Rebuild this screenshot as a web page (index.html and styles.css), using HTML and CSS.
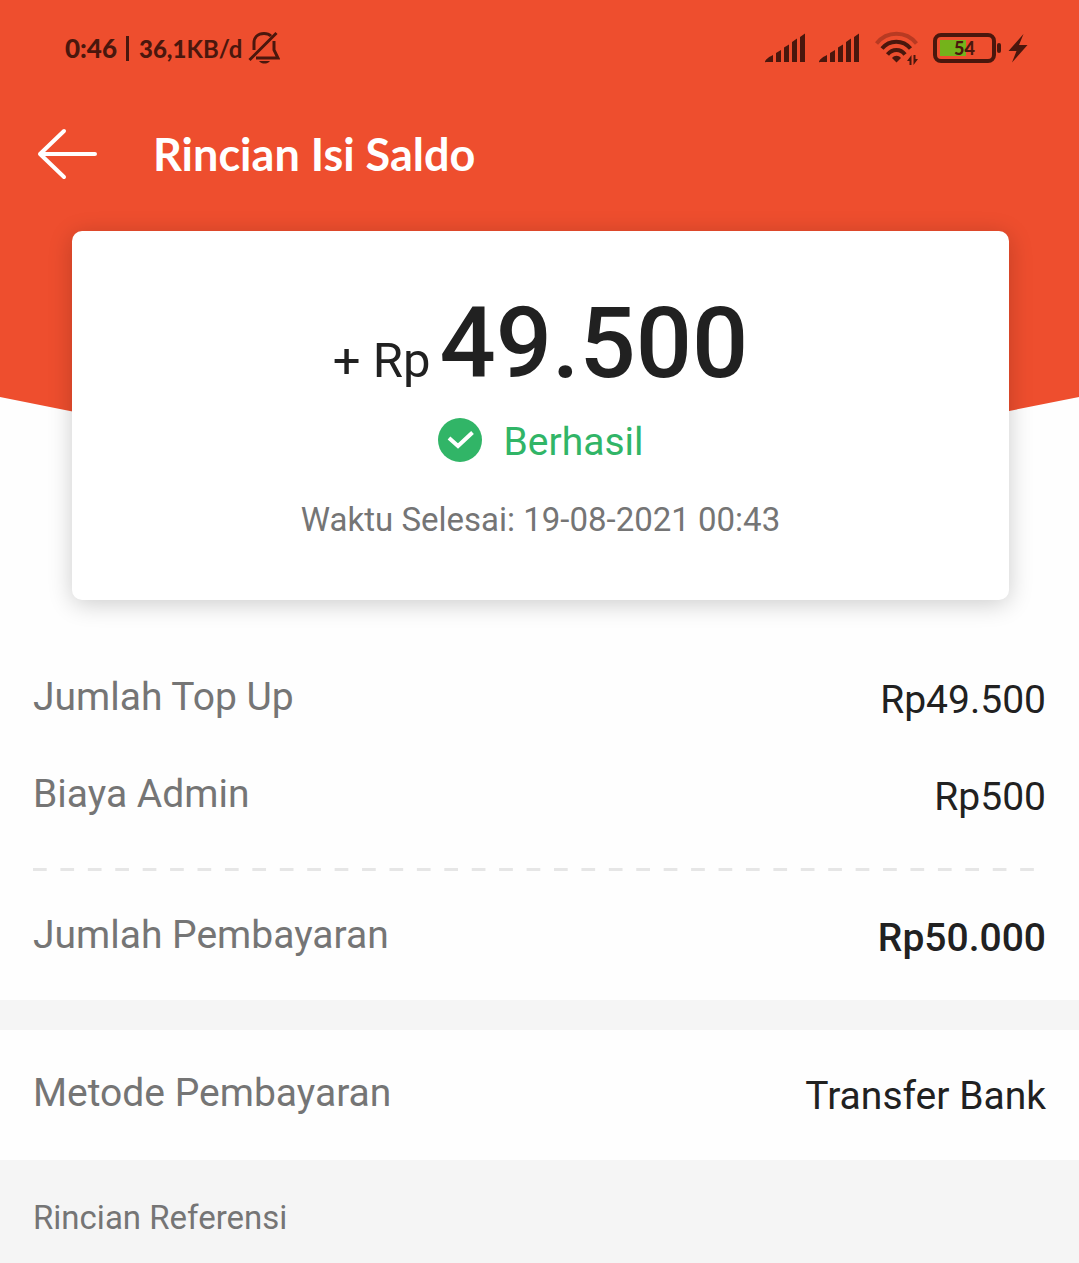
FILE: index.html
```html
<!DOCTYPE html>
<html lang="id">
<head>
<meta charset="utf-8">
<meta name="viewport" content="width=device-width, initial-scale=1">
<title>Rincian Isi Saldo</title>
<link rel="stylesheet" href="styles.css">
</head>
<body>
<header class="hero">
  <div class="status">
    <div class="status-left">
      <span class="status-time">0:46</span>
      <span class="status-divider"></span>
      <span class="status-speed">36,1<span class="status-unit">KB/d</span></span>
      <svg class="icon-bell" width="32" height="34" viewBox="0 0 32 34" fill="none" stroke="#4a170d" stroke-width="3" aria-label="Senyap">
        <path d="M6 19V12C6 6 10 2.500 16 2.500c3 0 5.500 1 7 2.500M26 10v9l4 8H8M1.500 29 28.500 2"/>
        <path d="M11 30h11c-1.500 2-3.500 2.500-5.500 2.500S12.500 32 11 30Z" fill="#4a170d" stroke="none"/>
      </svg>
    </div>
    <div class="status-right">
      <svg class="icon-signal" width="41" height="30" viewBox="0 0 41 30" fill="#4a170d" aria-label="Sinyal 1">
        <path d="M0 29c0-2 3-4.500 8-7v7H1Q0 29.500 0 29ZM11 20l5-3v11.500q0 .5-.5.500h-4q-.5 0-.5-.5ZM19 14.500l5-3V28.500q0 .5-.5.500h-4q-.5 0-.5-.5ZM27 9l5-3.500v23q0 .5-.5.500h-4q-.5 0-.5-.5ZM35 4l5-3.500v28q0 .5-.5.500h-4q-.5 0-.5-.5Z"/>
      </svg>
      <svg class="icon-signal" width="41" height="30" viewBox="0 0 41 30" fill="#4a170d" aria-label="Sinyal 2">
        <path d="M0 29c0-2 3-4.500 8-7v7H1Q0 29.500 0 29ZM11 20l5-3v11.500q0 .5-.5.500h-4q-.5 0-.5-.5ZM19 14.500l5-3V28.500q0 .5-.5.500h-4q-.5 0-.5-.5ZM27 9l5-3.500v23q0 .5-.5.500h-4q-.5 0-.5-.5ZM35 4l5-3.500v28q0 .5-.5.500h-4q-.5 0-.5-.5Z"/>
      </svg>
      <svg class="icon-wifi" width="43" height="34" viewBox="0 0 43 34" fill="none" stroke="#4a170d" stroke-width="4" aria-label="Wi-Fi">
        <path d="M1.500 12.500C12-.5 31-.5 41.500 12.500" stroke="#b83a22"/>
        <path d="M7 17.500C14.500 8.500 28 8.500 35.500 17.500"/>
        <path d="M12.500 23.500c5-6 13-6 17.500 0"/>
        <path d="M17 27c2.500-3 6.500-3 9 0l-4.500 4.500Z" fill="#4a170d" stroke="none"/>
        <path d="M36.500 24v10h-2v-4H32ZM38.500 34V24h2v4H43Z" fill="#4a170d" stroke="none"/>
      </svg>
      <div class="battery"><span class="battery-level"></span><span class="battery-text">54</span></div>
      <span class="battery-tip"></span>
      <svg class="icon-bolt" width="20" height="30" viewBox="0 0 20 30" fill="#4a170d" aria-label="Mengisi daya">
        <path d="M15.500 1 .5 18h8L4 29.500 19.500 12H11Z"/>
      </svg>
    </div>
  </div>
  <div class="toolbar">
    <button class="back" type="button" aria-label="Kembali">
      <svg width="60" height="52" viewBox="0 0 60 52" fill="none" stroke="#fff" stroke-width="4" stroke-linecap="round" stroke-linejoin="round">
        <path d="M27 3 3 26 27 49M3 26H58"/>
      </svg>
    </button>
    <h1 class="title">Rincian Isi Saldo</h1>
  </div>
</header>
<main>
  <section class="card">
    <p class="amount"><span class="currency">+ Rp</span><span class="value">49.500</span></p>
    <p class="result">
      <svg width="44" height="44" viewBox="0 0 44 44" fill="none" aria-hidden="true">
        <circle cx="22" cy="22" r="22" fill="#31b567"/>
        <path d="M11 20 20 28 34.500 14.500" stroke="#fff" stroke-width="4"/>
      </svg>
      <span class="result-text">Berhasil</span>
    </p>
    <p class="finished">Waktu Selesai: 19-08-2021 00:43</p>
  </section>
  <dl class="details">
    <div class="row"><dt>Jumlah Top Up</dt><dd>Rp49.500</dd></div>
    <div class="row"><dt>Biaya Admin</dt><dd>Rp500</dd></div>
    <div class="dashes"></div>
    <div class="row row-total"><dt>Jumlah Pembayaran</dt><dd>Rp50.000</dd></div>
    <div class="row row-method"><dt>Metode Pembayaran</dt><dd>Transfer Bank</dd></div>
  </dl>
  <h2 class="reference">Rincian Referensi</h2>
</main>
</body>
</html>
```
FILE: styles.css
```css
* { box-sizing: border-box; }

body {
  margin: 0;
  background: #fefefe;
  color: #212121;
  font-family: Roboto, "Liberation Sans", sans-serif;
}

h1, h2, p, dl, dd { margin: 0; }

svg { display: block; flex: none; }

.hero {
  height: 505px;
  margin-bottom: -274px;
  background: #ee4e2e;
  clip-path: polygon(0 0, 100% 0, 100% 397px, 50% 100%, 0 397px);
}

.status {
  display: flex;
  justify-content: space-between;
  height: 96px;
  padding: 0 51px 0 65px;
  color: #4a170d;
  font-family: Lato, sans-serif;
  font-size: 26px;
  font-weight: 900;
}

.status-left, .status-right { display: flex; align-items: center; }

.status-divider {
  width: 3px;
  height: 25px;
  margin: 0 10px 0 9px;
  background: #4a170d;
}

.status-speed { font-size: 24px; }

.status-unit { font-weight: 700; }

.icon-bell { margin-left: 6px; }

.icon-signal { margin-right: 13px; }

.icon-wifi { margin: 0 15px 0 2px; }

.battery {
  display: flex;
  position: relative;
  width: 63px;
  height: 30px;
  padding: 3px;
  border: 4px solid #4a170d;
  border-radius: 8px;
}

.battery-level { width: 26px; background: #74b31b; }

.battery-text {
  position: absolute;
  inset: 0;
  font-size: 18px;
  line-height: 22px;
  text-align: center;
}

.battery-tip {
  width: 4px;
  height: 10px;
  margin: 0 7px 0 1px;
  border-radius: 2px;
  background: #4a170d;
}

.toolbar {
  display: flex;
  align-items: center;
  gap: 56px;
  height: 116px;
  padding: 0 37px;
}

.back {
  padding: 0;
  border: 0;
  background: none;
  cursor: pointer;
}

.title {
  color: #fff;
  font-family: Lato, sans-serif;
  font-size: 45px;
  font-weight: 700;
  line-height: 60px;
}

.card {
  position: relative;
  margin: 0 70px 0 72px;
  padding: 62px 24px 58px;
  border-radius: 10px;
  background: #fff;
  box-shadow: 0 4px 24px rgba(0, 0, 0, 0.2);
  text-align: center;
}

.amount { font-size: 99px; line-height: 100px; }

.currency { margin-right: 9px; font-size: 49px; line-height: 49px; }

.value { font-weight: 500; }

.result {
  display: flex;
  align-items: center;
  justify-content: center;
  gap: 22px;
  margin-top: 23px;
  color: #31b567;
  font-size: 39px;
  line-height: 44px;
}

.result-text { padding-top: 4px; }

.finished {
  margin-top: 34px;
  color: #757575;
  font-size: 33px;
  line-height: 44px;
}

.details { padding-top: 50px; }

.row {
  display: flex;
  align-items: center;
  justify-content: space-between;
  height: 97px;
  padding: 0 33px;
  font-size: 39px;
}

.row dt { padding-bottom: 4px; color: #757575; }

.row dd { padding-top: 2px; }

.dashes {
  height: 3px;
  margin: 24px 32px 18px;
  background: linear-gradient(90deg, transparent 1px, #e6e6e6 1px 54%, transparent 54%) 0 0 / calc(100% / 37) 100%;
}

.row-total {
  height: 141px;
  padding-bottom: 15px;
  border-bottom: 30px solid #f5f5f5;
}

.row-total dd { font-weight: 500; }

.row-method { height: 130px; }

.reference {
  min-height: 103px;
  padding: 37px 33px 24px;
  background: #f5f5f5;
  color: #757575;
  font-size: 33px;
  font-weight: 400;
  line-height: 42px;
}
```
